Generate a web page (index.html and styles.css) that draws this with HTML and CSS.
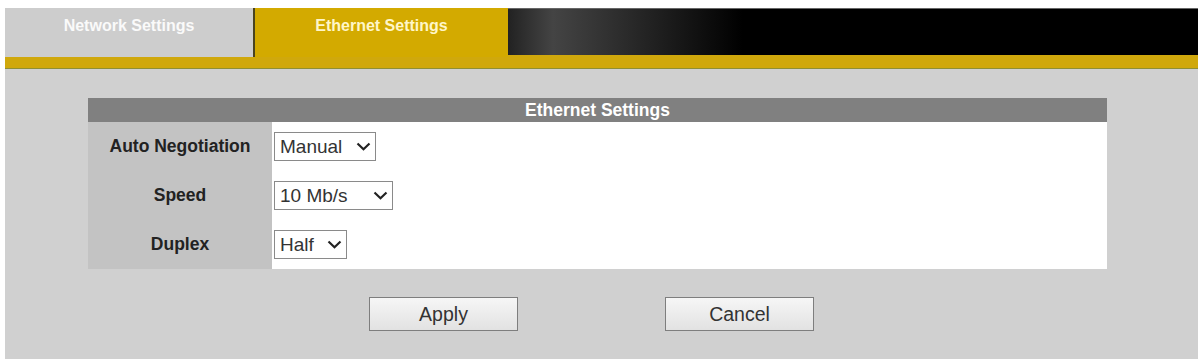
FILE: index.html
```html
<!DOCTYPE html>
<html lang="en">

<head>
    <meta charset="utf-8">
    <title>Ethernet Settings</title>
    <link rel="stylesheet" href="styles.css">
</head>

<body>

    <div class="page">
        <div class="tabs">
            <a class="tab" href="#">Network Settings</a>
            <a class="tab aktiv" href="#">Ethernet Settings</a>
            <div class="tabfill"></div>
        </div>
        <div class="goldline"></div>

        <div class="content">
            <table class="settings">
                <tr>
                    <th colspan="2" class="head">Ethernet Settings</th>
                </tr>
                <tr>
                    <td class="label">Auto Negotiation</td>
                    <td class="value">
                        <span class="select w-manual">
                            <select>
                                <option>Manual</option>
                                <option>Auto</option>
                            </select>
                            <svg width="15" height="9" viewBox="0 0 15 9"><path d="M1.5 1.5 L7.5 7.2 L13.5 1.5" fill="none" stroke="#222" stroke-width="2.2"/></svg>
                        </span>
                    </td>
                </tr>
                <tr>
                    <td class="label">Speed</td>
                    <td class="value">
                        <span class="select w-speed">
                            <select>
                                <option>10 Mb/s</option>
                                <option>100 Mb/s</option>
                            </select>
                            <svg width="15" height="9" viewBox="0 0 15 9"><path d="M1.5 1.5 L7.5 7.2 L13.5 1.5" fill="none" stroke="#222" stroke-width="2.2"/></svg>
                        </span>
                    </td>
                </tr>
                <tr>
                    <td class="label">Duplex</td>
                    <td class="value">
                        <span class="select w-duplex">
                            <select>
                                <option>Half</option>
                                <option>Full</option>
                            </select>
                            <svg width="15" height="9" viewBox="0 0 15 9"><path d="M1.5 1.5 L7.5 7.2 L13.5 1.5" fill="none" stroke="#222" stroke-width="2.2"/></svg>
                        </span>
                    </td>
                </tr>
            </table>

            <div class="knapper">
                <button class="knap">Apply</button>
                <button class="knap">Cancel</button>
            </div>
        </div>
    </div>

</body>

</html>
```

FILE: styles.css
```css
body {
    margin: 0;
    background-color: #fff;
    font-family: "Liberation Sans", Arial, sans-serif;
}

.page {
    margin: 8px 5px 0 5px;
}

.tabs {
    display: flex;
    height: 49px;
    background-color: #d0a80c;
}

.tab {
    display: block;
    width: 248px;
    height: 49px;
    line-height: 36px;
    text-align: center;
    background-color: #cdcdcd;
    color: #fafafa;
    font-weight: bold;
    font-size: 16px;
    text-decoration: none;
}

.tab.aktiv {
    width: 253px;
    background-color: #d3aa00;
    color: #fff6c8;
    border-left: 2px solid #4a4420;
}

.tabfill {
    flex: 1;
    margin-bottom: 2px;
    background: linear-gradient(to right, #222 0px, #444 45px, #2a2a2a 120px, #000 235px);
    border-top: 1px solid #666;
}

.goldline {
    height: 11px;
    background-color: #d0a80c;
    border-bottom: 1px solid #8f8f36;
}

.content {
    background-color: #d0d0d0;
    padding: 29px 0 28px 83px;
}

.settings {
    border-collapse: collapse;
    width: 1019px;
}

.head {
    height: 24px;
    padding: 0;
    background-color: #808080;
    color: #fff;
    font-size: 17.5px;
    font-weight: bold;
    text-align: center;
}

.settings td {
    height: 49px;
    padding: 0;
}

.label {
    width: 184px;
    background-color: #c3c3c3;
    color: #222;
    font-weight: bold;
    font-size: 17.5px;
    text-align: center;
}

.value {
    background-color: #fff;
    padding-left: 2px !important;
}

.select {
    display: inline-flex;
    align-items: center;
    height: 27px;
    border: 1px solid #8a8a8a;
    background-color: #fff;
    vertical-align: middle;
}

.select select {
    appearance: none;
    -webkit-appearance: none;
    border: none;
    background: transparent;
    font-family: "Liberation Sans", Arial, sans-serif;
    font-size: 19px;
    color: #333;
    padding: 0 0 0 5px;
    flex: 1;
    height: 27px;
    outline: none;
}

.select svg {
    margin-right: 4px;
}

.w-manual {
    width: 100px;
}

.w-speed {
    width: 117px;
}

.w-duplex {
    width: 71px;
}

.knapper {
    display: flex;
    gap: 147px;
    margin-top: 28px;
    padding-left: 281px;
}

.knap {
    width: 149px;
    height: 34px;
    border: 1px solid #7e7e7e;
    background: linear-gradient(#f6f6f6, #e2e2e2);
    font-family: "Liberation Sans", Arial, sans-serif;
    font-size: 19.5px;
    color: #333;
    padding: 0;
}
```
